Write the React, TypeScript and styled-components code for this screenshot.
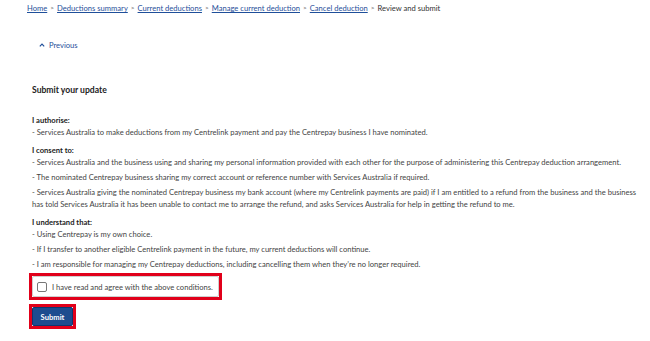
import React from "react";
import styled, { createGlobalStyle } from "styled-components";

const Global = createGlobalStyle`
  html, body { margin: 0; padding: 0; background: #ffffff; }
  body { font-family: Lato, "Noto Sans", sans-serif; color: #333333; }
`;

const Page = styled.div`
  width: 650px;
  height: 341px;
  overflow: hidden;
  background: #fff;
`;

const Crumbs = styled.nav`
  display: flex;
  align-items: center;
  gap: 3px;
  padding: 2px 0 0 27px;
  font-size: 7.6px;
  line-height: 12px;
`;

const CrumbLink = styled.a`
  color: #1f4f9a;
  text-decoration: underline;
  cursor: pointer;
`;

const Sep = styled.span`
  color: #555;
  font-size: 6.5px;
`;

const Current = styled.span`
  color: #333;
`;

const Prev = styled.a`
  display: flex;
  align-items: center;
  gap: 4px;
  margin: 25px 0 0 39px;
  font-size: 7.6px;
  line-height: 12px;
  color: #1f4f9a;
  cursor: pointer;
`;

const Content = styled.section`
  width: 614px;
  padding-left: 32px;
`;

const Title = styled.h2`
  margin: 33px 0 0;
  font-size: 8.6px;
  line-height: 13px;
  font-weight: 700;
  color: #222;
`;

const Group = styled.div<{ $top: number }>`
  margin-top: ${(p) => p.$top}px;
`;

const Heading = styled.p`
  margin: 0;
  font-size: 7.6px;
  line-height: 12px;
  font-weight: 700;
  color: #222;
`;

const Item = styled.p`
  margin: 0 0 3px;
  font-size: 7.6px;
  line-height: 12px;
  color: #444;
`;

const Annot = styled.div`
  display: inline-flex;
  border: 3px solid #e1001a;
`;

const AgreeBox = styled.label`
  display: flex;
  align-items: center;
  gap: 5px;
  width: 181px;
  height: 19px;
  padding: 0 0 0 4px;
  border: 1px solid #cfcfcf;
  border-radius: 2px;
  font-size: 7.6px;
  color: #444;
  white-space: nowrap;
`;

const Check = styled.span`
  flex-shrink: 0;
  width: 8px;
  height: 8px;
  border: 1px solid #777;
  border-radius: 2px;
  background: #fff;
`;

const Stack = styled.div`
  display: flex;
  flex-direction: column;
  align-items: flex-start;
  gap: 4px;
  margin: 2px 0 0 29px;
`;

const SubmitBtn = styled.button`
  width: 41px;
  height: 19px;
  border: 1px solid #0f3670;
  border-radius: 2px;
  background: #1d4c8f;
  color: #fff;
  font-family: Lato, sans-serif;
  font-size: 7.6px;
  font-weight: 700;
  padding: 0;
`;

export default function App() {
  return (
    <Page>
      <Global />
      <Crumbs>
        <CrumbLink>Home</CrumbLink>
        <Sep>&gt;</Sep>
        <CrumbLink>Deductions summary</CrumbLink>
        <Sep>&gt;</Sep>
        <CrumbLink>Current deductions</CrumbLink>
        <Sep>&gt;</Sep>
        <CrumbLink>Manage current deduction</CrumbLink>
        <Sep>&gt;</Sep>
        <CrumbLink>Cancel deduction</CrumbLink>
        <Sep>&gt;</Sep>
        <Current>Review and submit</Current>
      </Crumbs>
      <Prev>
        <svg width="6" height="4" viewBox="0 0 6 4">
          <path d="M0.8 3.4 L3 1.2 L5.2 3.4" fill="none" stroke="#1f4f9a" strokeWidth="1.2" />
        </svg>
        Previous
      </Prev>
      <Content>
        <Title>Submit your update</Title>
        <Group $top={17}>
          <Heading>I authorise:</Heading>
          <Item>- Services Australia to make deductions from my Centrelink payment and pay the Centrepay business I have nominated.</Item>
        </Group>
        <Group $top={6}>
          <Heading>I consent to:</Heading>
          <Item>- Services Australia and the business using and sharing my personal information provided with each other for the purpose of administering this Centrepay deduction arrangement.</Item>
          <Item>- The nominated Centrepay business sharing my correct account or reference number with Services Australia if required.</Item>
          <Item>- Services Australia giving the nominated Centrepay business my bank account (where my Centrelink payments are paid) if I am entitled to a refund from the business and the business has told Services Australia it has been unable to contact me to arrange the refund, and asks Services Australia for help in getting the refund to me.</Item>
        </Group>
        <Group $top={6}>
          <Heading>I understand that:</Heading>
          <Item>- Using Centrepay is my own choice.</Item>
          <Item>- If I transfer to another eligible Centrelink payment in the future, my current deductions will continue.</Item>
          <Item>- I am responsible for managing my Centrepay deductions, including cancelling them when they’re no longer required.</Item>
        </Group>
      </Content>
      <Stack>
        <Annot>
          <AgreeBox>
            <Check />
            I have read and agree with the above conditions.
          </AgreeBox>
        </Annot>
        <Annot>
          <SubmitBtn>Submit</SubmitBtn>
        </Annot>
      </Stack>
    </Page>
  );
}
